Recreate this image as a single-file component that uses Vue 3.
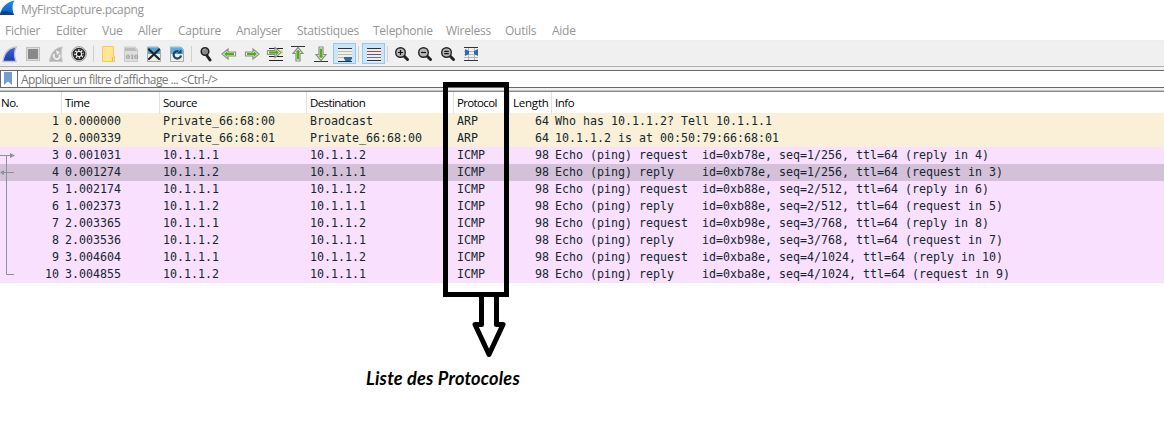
<script setup>
const menus = [
  { label: 'Fichier', w: 51 }, { label: 'Editer', w: 46 }, { label: 'Vue', w: 36 }, { label: 'Aller', w: 40 },
  { label: 'Capture', w: 58 }, { label: 'Analyser', w: 61 }, { label: 'Statistiques', w: 76 },
  { label: 'Telephonie', w: 73 }, { label: 'Wireless', w: 59 }, { label: 'Outils', w: 47 }, { label: 'Aide', w: 40 },
]
const a = '10.1.1.1', b = '10.1.1.2'
const echo = (req, id, seq, other) =>
  `Echo (ping) ${req ? 'request' : 'reply  '}  id=${id}, seq=${seq}, ttl=64 (${req ? 'reply' : 'request'} in ${other})`
const rows = [
  [1, '0.000000', 'Private_66:68:00', 'Broadcast', 'ARP', 64, 'Who has 10.1.1.2? Tell 10.1.1.1'],
  [2, '0.000339', 'Private_66:68:01', 'Private_66:68:00', 'ARP', 64, '10.1.1.2 is at 00:50:79:66:68:01'],
  [3, '0.001031', a, b, 'ICMP', 98, echo(true, '0xb78e', '1/256', 4)],
  [4, '0.001274', b, a, 'ICMP', 98, echo(false, '0xb78e', '1/256', 3)],
  [5, '1.002174', a, b, 'ICMP', 98, echo(true, '0xb88e', '2/512', 6)],
  [6, '1.002373', b, a, 'ICMP', 98, echo(false, '0xb88e', '2/512', 5)],
  [7, '2.003365', a, b, 'ICMP', 98, echo(true, '0xb98e', '3/768', 8)],
  [8, '2.003536', b, a, 'ICMP', 98, echo(false, '0xb98e', '3/768', 7)],
  [9, '3.004604', a, b, 'ICMP', 98, echo(true, '0xba8e', '4/1024', 10)],
  [10, '3.004855', b, a, 'ICMP', 98, echo(false, '0xba8e', '4/1024', 9)],
]
const heads = ['No.', 'Time', 'Source', 'Destination', 'Protocol', 'Length', 'Info']
</script>

<template>
  <div class="window">
    <div class="title">
      <svg width="16" height="16" viewBox="0 0 16 16"><defs><linearGradient id="fin" x2="0" y2="1"><stop offset="0" stop-color="#2489ec" /><stop offset="1" stop-color="#0b5ab6" /></linearGradient></defs><path d="M0 15C1 8 6 2 14.5.5 12 4 12 9 14 15Z" fill="url(#fin)" /><path d="M0 15Q.4 12.5 1.2 11.5Q8 10.5 13 13.5L14 15Z" fill="#103f87" /></svg>
      <span>MyFirstCapture.pcapng</span>
    </div>
    <nav class="menu">
      <span v-for="m in menus" :key="m.label" :style="{ width: m.w + 'px' }">{{ m.label }}</span>
    </nav>
    <div class="toolbar">
      <svg width="500" height="25" viewBox="0 41 500 25">
        <defs>
          <linearGradient id="blue" x2="0" y2="1"><stop stop-color="#3867df" /><stop offset="1" stop-color="#1c3aae" /></linearGradient>
          <path id="arrow" d="M-7 0-1-5V-2H6.5V2H-1V5Z" />
          <path id="arrowInner" d="M-5 0-2-2.7V-1.2H5V1.2H-2V2.7Z" />
          <g id="lens"><path d="M3 3 7 7" stroke="#222" stroke-width="3" stroke-linecap="round" /><circle r="4.8" fill="#b8b8b8" stroke="#222" stroke-width="1.4" /></g>
          <path id="page" d="M-6.5-7H4L6.5-4.5V7.5H-6.5Z" />
        </defs>
        <path d="M3 61.5C4 54 8 48 16.3 47Q13 53 16 61.5Z" fill="url(#blue)" stroke="#bfc1c8" stroke-width="1.3" />
        <rect x="26.5" y="47.5" width="13" height="13" fill="#ddd" stroke="#c0c0c0" /><rect x="28" y="49" width="10" height="10" fill="#888" />
        <path d="M49.5 61.5C50.5 54 54 48 62.3 47Q60 53 62.3 61.5Z" fill="#b3b3b3" stroke="#c8c8c8" /><path d="M59.3 54.5A3 3 0 1 1 54.5 54" fill="none" stroke="#f2f2f2" stroke-width="1.7" /><path d="M56 50.5 60 52 57 55Z" fill="#f2f2f2" />
        <circle cx="79" cy="54" r="7.4" fill="#eee" stroke="#999" /><circle cx="79" cy="54" r="5.6" fill="#eee" stroke="#222" stroke-width="1.5" /><circle cx="79" cy="54" r="4" fill="none" stroke="#222" stroke-width="1.7" stroke-dasharray="1.8 1.34" /><circle cx="79" cy="54" r="2" fill="#111" />
        <path d="M93.5 46V62M191.5 46V62M358.5 46V62M387.5 46V62" stroke="#d0d0d0" />
        <path d="M102.5 46.5H113.5V56.5H114.5V61.5H102.5Z" fill="#ffe594" stroke="#f0c957" /><path d="M112.5 57V61" stroke="#e7bb42" />
        <g transform="translate(131 54)"><use href="#page" fill="#dedede" stroke="#cacaca" /><path d="M-6-6H4L6-3H-6Z" fill="#bbb" /><text x="-5.3" y="5" class="bits">010</text></g>
        <g transform="translate(154 54)"><use href="#page" fill="#efefdf" stroke="#aaa" /><path d="M-6-6.5H4L6-4V0H-6Z" fill="#4da6de" /><path d="M-5-4.5 5 5M5-4.5-5 5" stroke="#1c2328" stroke-width="2.2" stroke-linecap="round" /></g>
        <g transform="translate(177 54)"><use href="#page" fill="#f1f0dc" stroke="#aaa" /><path d="M-6-6.5H4L6-4V0H-6Z" fill="#58b0e2" /><path d="M1.5-2.7A3.7 3.7 0 1 0 4 1.5" fill="none" stroke="#164878" stroke-width="2.2" /><path d="M0-.5H4.5V-5Z" fill="#164878" /></g>
        <g transform="translate(205 51.5)"><path d="M1.5 3.5 5 8.5" stroke="#222" stroke-width="3" stroke-linecap="round" /><circle r="3.8" fill="#888" stroke="#222" stroke-width="1.5" /><path d="M-2-1 0-3" stroke="#ccc" /></g>
        <g transform="translate(229 54)"><use href="#arrow" class="outer" /><use href="#arrowInner" class="inner" /></g>
        <g transform="translate(252 54) scale(-1 1)"><use href="#arrow" class="outer" /><use href="#arrowInner" class="inner" /></g>
        <path d="M269 48.5H283M269 56.5H283M269 60.5H283" stroke="#222" /><path d="M279 52H283" stroke="#f7d850" stroke-width="3" />
        <g transform="translate(274 52.5) scale(-1 1)"><use href="#arrow" class="outer" /><use href="#arrowInner" class="inner" /></g>
        <path d="M291 46.5H305M314 61.5H328" stroke="#333" />
        <g transform="translate(298 54.5) rotate(90)"><use href="#arrow" class="outer" /><use href="#arrowInner" class="inner" /></g>
        <g transform="translate(321 53.5) rotate(-90)"><use href="#arrow" class="outer" /><use href="#arrowInner" class="inner" /></g>
        <rect x="333.5" y="43.5" width="22" height="20" class="active" /><rect x="362.5" y="43.5" width="22" height="20" class="active" />
        <path d="M338 48H352V62H338ZM367 48H381V62H367Z" fill="#f0f0ea" />
        <path d="M338 48.5H352M338 61.5H352" stroke="#29333a" /><path d="M338 51.5H352M338 54.5H352M338 57.5H352" stroke="#b9bcb4" /><path d="M344 57H352V58.5L350.5 61H345.5L344 58.5Z" fill="#3166b0" />
        <path d="M367 48.5H381M367 60.5H381" stroke="#25313d" /><path d="M367 51.5H381" stroke="#e5323a" /><path d="M367 54.5H381" stroke="#365fb0" /><path d="M367 57.5H381" stroke="#7e6492" />
        <g transform="translate(400.5 52.5)"><use href="#lens" /><path d="M-2.5 0H2.5M0-2.5V2.5" class="sign" /></g>
        <g transform="translate(423.5 52.5)"><use href="#lens" /><path d="M-2.5 0H2.5" class="sign" /></g>
        <g transform="translate(446.5 52.5)"><use href="#lens" /><path d="M-2.3-1.1H2.3M-2.3 1.1H2.3" class="sign" /></g>
        <path d="M464 47.5H478M464 60.5H478" stroke="#333" /><path d="M464 51.5H478M464 54.5H478M464 57.5H478M468.5 48V60M474.5 48V60" stroke="#b4b8b2" /><path d="M465 49 469 51V54L465 56ZM478 49 474 51V54L478 56Z" fill="#3167af" />
      </svg>
    </div>
    <div class="filterbar">
      <div class="filter">
        <div class="bookmark"><svg width="10" height="14" viewBox="0 0 10 14"><path d="M1 0H9V13L5 9.5 1 13Z" fill="#739fd0" /></svg></div>
        <span>Appliquer un filtre d'affichage ... &lt;Ctrl-/&gt;</span>
      </div>
    </div>
    <div class="table">
      <div class="row head"><span v-for="h in heads" :key="h">{{ h }}</span></div>
      <div v-for="r in rows" :key="r[0]" class="row" :class="{ arp: r[4] === 'ARP', selected: r[0] === 4 }">
        <span v-for="(c, i) in r" :key="i">{{ c }}</span>
      </div>
      <svg class="related" width="16" height="136" viewBox="0 147 16 136"><path d="M0 155.5H11M6.5 155V274.5H14M3 172.5H14" fill="none" stroke="#899298" /><path d="M10 153 15 155.5 10 158ZM4 170 0 172.5 4 175Z" fill="#899298" /></svg>
    </div>
    <svg class="marker" width="90" height="290" viewBox="435 75 90 290">
      <path d="M445.5 84.5H506.5V294.5H445.5Z" fill="none" stroke="#000" stroke-width="5" />
      <path d="M481.5 295V324.5H475L489 354.5 503 324.5H496.5V295" fill="none" stroke="#000" stroke-width="5" stroke-linejoin="round" />
    </svg>
    <div class="caption">Liste des Protocoles</div>
  </div>
</template>

<style>
body { margin: 0; background: #fff; overflow: hidden; }
</style>
<style scoped>
.window { position: relative; width: 1164px; height: 444px; background: #fff; font: 12px "Open Sans", "Noto Sans", sans-serif; overflow: hidden; white-space: pre; }
.title { height: 20px; display: flex; color: #959595; line-height: 19px; letter-spacing: -.35px; }
.title span { margin-left: 5px; }
.menu { height: 20px; display: flex; padding-left: 5px; color: #959595; line-height: 22px; letter-spacing: -.25px; border-bottom: 1px solid #eee; }
.toolbar { height: 25px; background: #f0f0f0; border-bottom: 1px solid #b0b0b0; }
.toolbar svg { display: block; }
.bits { font: bold 6px "DejaVu Serif", serif; fill: #999; }
.outer { fill: #fff; stroke: #8c8c8c; stroke-width: 1.2; }
.inner { fill: #4fb012; }
.active { fill: #cce4f7; stroke: #90c8f6; }
.sign { stroke: #111; stroke-width: 1.2; }
.filterbar { padding: 3px 0 2px; background: #f0f0f0; }
.filter { height: 16px; display: flex; background: #fff; border: 1px solid #686868; border-right: 0; line-height: 18px; color: #777; letter-spacing: -.6px; }
.bookmark { box-sizing: border-box; width: 17px; padding: 1px 2px; border-right: 1px solid #686868; }
.bookmark svg { display: block; }
.filter span { margin-left: 3px; }
.table { position: relative; border-top: 1px solid #888; box-shadow: 0 -1px #c4c4c4; margin-top: 1px; }
.row { display: grid; grid-template-columns: 62px 98px 147px 147px 56px 42px 1fr; height: 17px; line-height: 17px; font-family: "DejaVu Sans Mono", monospace; font-size: 11.635px; background: #fae0ff; color: #12272e; }
.row span { padding-left: 3px; }
.row:not(.head) span:nth-child(1), .row:not(.head) span:nth-child(6) { text-align: right; padding: 0 3px 0 0; }
.row.arp { background: #faf0d7; }
.row.selected { background: #d5c0da; }
.row.head { height: 21px; background: #fff; color: #000; font: 11.5px/22px "Open Sans", sans-serif; letter-spacing: -.5px; }
.head span { border-right: 1px solid #e2e2e2; }
.head span:first-child { padding-left: 1px; }
.head span:nth-child(5) { letter-spacing: -.65px; }
.head span:nth-child(6) { letter-spacing: -.22px; }
.head span:nth-child(4) { letter-spacing: -.6px; }
.head span:last-child { border: 0; }
.related { position: absolute; left: 0; top: 55px; }
.marker { position: absolute; left: 435px; top: 75px; }
.caption { position: absolute; left: 366px; top: 367px; font: italic bold 18.2px/22px Lato, sans-serif; letter-spacing: .2px; color: #000; }
</style>
